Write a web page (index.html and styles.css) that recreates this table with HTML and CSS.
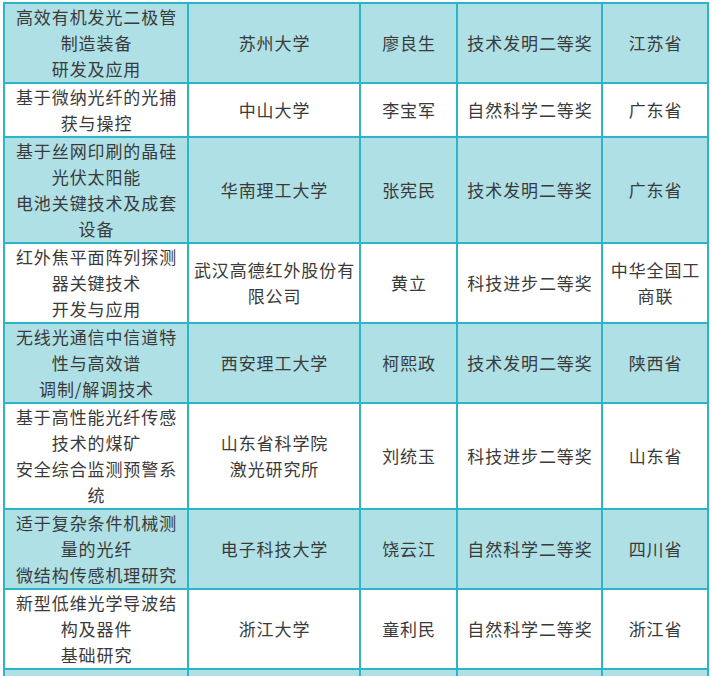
FILE: index.html
```html
<!DOCTYPE html>
<html lang="zh-CN">
<head>
<meta charset="utf-8">
<title>获奖项目</title>
<link rel="stylesheet" href="styles.css">
</head>
<body>
<div class="table">
  <div class="row blue">
    <div class="cell">高效有机发光二极管<br>制造装备<br>研发及应用</div>
    <div class="cell">苏州大学</div>
    <div class="cell">廖良生</div>
    <div class="cell">技术发明二等奖</div>
    <div class="cell">江苏省</div>
  </div>
  <div class="row">
    <div class="cell">基于微纳光纤的光捕<br>获与操控</div>
    <div class="cell">中山大学</div>
    <div class="cell">李宝军</div>
    <div class="cell">自然科学二等奖</div>
    <div class="cell">广东省</div>
  </div>
  <div class="row blue">
    <div class="cell">基于丝网印刷的晶硅<br>光伏太阳能<br>电池关键技术及成套<br>设备</div>
    <div class="cell">华南理工大学</div>
    <div class="cell">张宪民</div>
    <div class="cell">技术发明二等奖</div>
    <div class="cell">广东省</div>
  </div>
  <div class="row">
    <div class="cell">红外焦平面阵列探测<br>器关键技术<br>开发与应用</div>
    <div class="cell">武汉高德红外股份有<br>限公司</div>
    <div class="cell">黄立</div>
    <div class="cell">科技进步二等奖</div>
    <div class="cell">中华全国工<br>商联</div>
  </div>
  <div class="row blue">
    <div class="cell">无线光通信中信道特<br>性与高效谱<br>调制/解调技术</div>
    <div class="cell">西安理工大学</div>
    <div class="cell">柯熙政</div>
    <div class="cell">技术发明二等奖</div>
    <div class="cell">陕西省</div>
  </div>
  <div class="row">
    <div class="cell">基于高性能光纤传感<br>技术的煤矿<br>安全综合监测预警系<br>统</div>
    <div class="cell">山东省科学院<br>激光研究所</div>
    <div class="cell">刘统玉</div>
    <div class="cell">科技进步二等奖</div>
    <div class="cell">山东省</div>
  </div>
  <div class="row blue">
    <div class="cell">适于复杂条件机械测<br>量的光纤<br>微结构传感机理研究</div>
    <div class="cell">电子科技大学</div>
    <div class="cell">饶云江</div>
    <div class="cell">自然科学二等奖</div>
    <div class="cell">四川省</div>
  </div>
  <div class="row">
    <div class="cell">新型低维光学导波结<br>构及器件<br>基础研究</div>
    <div class="cell">浙江大学</div>
    <div class="cell">童利民</div>
    <div class="cell">自然科学二等奖</div>
    <div class="cell">浙江省</div>
  </div>
  <div class="row blue">
    <div class="cell empty"></div>
    <div class="cell empty"></div>
    <div class="cell empty"></div>
    <div class="cell empty"></div>
    <div class="cell empty"></div>
  </div>
</div>
</body>
</html>
```

FILE: styles.css
```css
html, body {
  margin: 0;
  padding: 0;
  background: #ffffff;
}
body {
  padding: 2px 0 0 3px;
  font-family: "Noto Sans CJK SC", "Noto Sans", sans-serif;
  font-size: 17px;
  color: #3a3a3a;
}
.table {
  width: 706px;
  border-left: 2px solid #2bb5c6;
  border-top: 2px solid #2bb5c6;
  box-sizing: border-box;
}
.row {
  display: grid;
  grid-template-columns: 184px 172px 97px 145px 106px;
  background: #ffffff;
}
.row.blue {
  background: #aee0e6;
}
.cell {
  border-right: 2px solid #2bb5c6;
  border-bottom: 2px solid #2bb5c6;
  display: flex;
  align-items: center;
  justify-content: center;
  text-align: center;
  line-height: 26px;
  letter-spacing: 0.9px;
  padding: 0 0 0 1px;
  white-space: nowrap;
}
.cell.empty {
  height: 78px;
}
```
